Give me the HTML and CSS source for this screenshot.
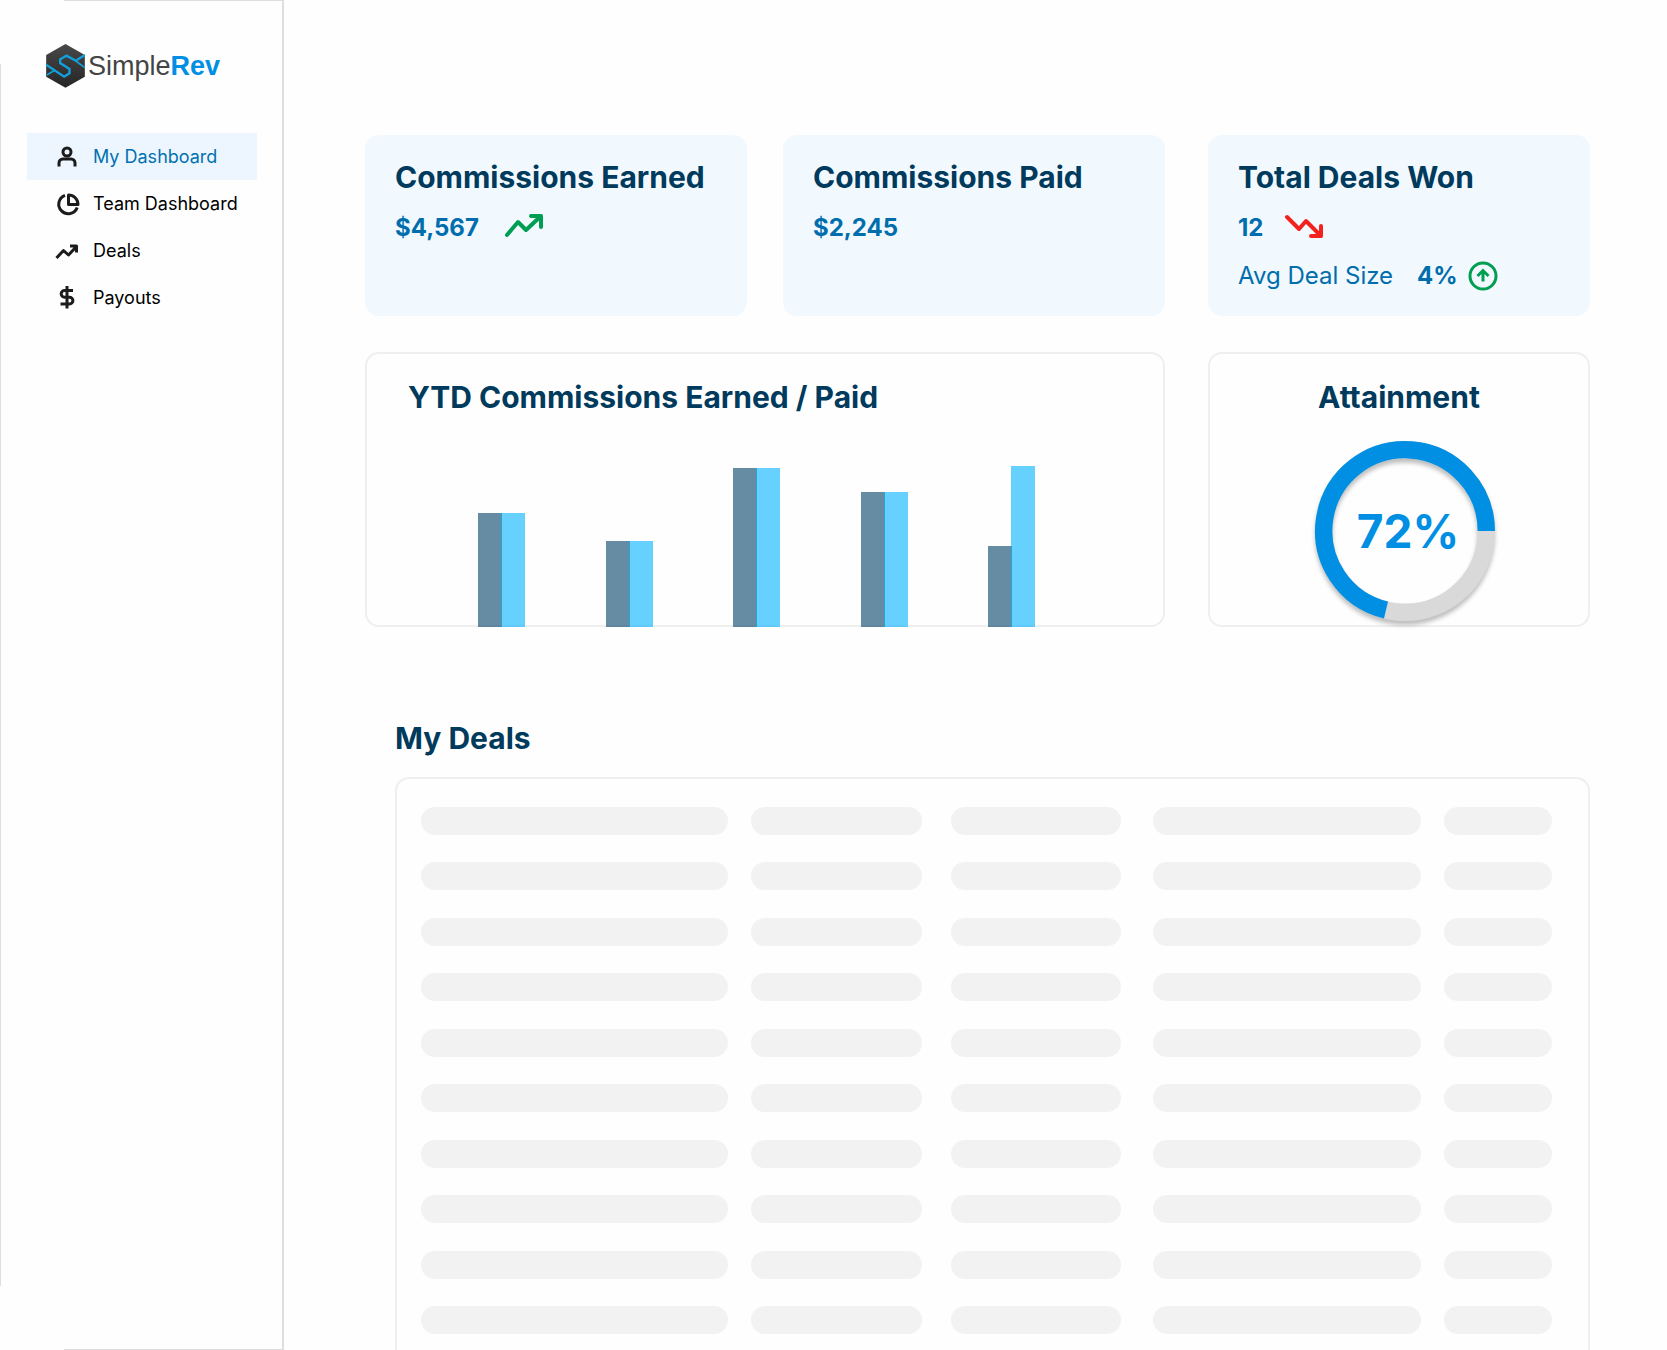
FILE: index.html
```html
<!DOCTYPE html>
<html lang="en">
<head>
<meta charset="utf-8">
<meta name="viewport" content="width=device-width, initial-scale=1">
<title>SimpleRev - My Dashboard</title>
<link rel="stylesheet" href="styles.css">
</head>
<body>
<div class="app">
  <aside class="sidebar">
    <a class="logo" href="#">
      <svg class="logo-mark" viewBox="0 0 116 132" aria-hidden="true">
        <defs><linearGradient id="hex" x1="0" y1="0" x2="0" y2="1"><stop offset="0" stop-color="#484848"/><stop offset="1" stop-color="#262626"/></linearGradient></defs>
        <path d="M58 0 116 33V98L58 131 0 98V33Z" fill="url(#hex)"/>
        <path d="M116 33 89 50 61 35 42 46V57L70 75V88L54 98 0 62" fill="none" stroke="#12a0dc" stroke-width="7"/>
        <path d="M89 51 116 71M2 93 27 78" fill="none" stroke="#12a0dc" stroke-width="5"/>
      </svg>
      <span class="logo-text">Simple<b>Rev</b></span>
    </a>
    <nav class="nav">
      <a class="nav-item active" href="#">
        <svg class="nav-icon" viewBox="0 0 24 24" aria-hidden="true"><circle cx="12" cy="7" r="4"/><path d="M4 21.500V18a4 4 0 0 1 4-4h8a4 4 0 0 1 4 4v3.500"/></svg>
        My Dashboard</a>
      <a class="nav-item" href="#">
        <svg class="nav-icon" viewBox="0 0 24 24" aria-hidden="true"><path d="M10 3.300A9.500 9.500 0 1 0 22.200 15.500M13.500 3v9.500H23A9.500 9.500 0 0 0 13.500 3Z"/></svg>
        Team Dashboard</a>
      <a class="nav-item" href="#">
        <svg class="nav-icon" viewBox="0 0 24 24" aria-hidden="true"><path d="M1.500 19 8.500 11.500l5 4.500 8-8.500M15 7h6.500V13.500"/></svg>
        Deals</a>
      <a class="nav-item" href="#">
        <svg class="nav-icon" viewBox="0 0 24 24" aria-hidden="true"><path d="M12 0v22.500M18 4.500H9.500a3.300 3.300 0 0 0 0 6.700h5a3.400 3.400 0 0 1 0 6.800H5.500"/></svg>
        Payouts</a>
    </nav>
  </aside>

  <main class="main">
    <div class="overview">
      <div class="pair">
        <section class="card">
          <h2>Commissions Earned</h2>
          <p class="value">$4,567
            <svg class="trend up" viewBox="0 0 40 24" aria-hidden="true"><path d="M4 19 15 6l8 8L38 0M28 0h10v11"/></svg>
          </p>
        </section>
        <section class="card">
          <h2>Commissions Paid</h2>
          <p class="value">$2,245</p>
        </section>
      </div>
      <section class="card">
        <h2>Total Deals Won</h2>
        <p class="value">12
          <svg class="trend down" viewBox="0 0 40 24" aria-hidden="true"><path d="M0 1 12 13 19 5 34 20M24 20h10V10"/></svg>
        </p>
        <p class="value"><span class="label">Avg Deal Size</span> <span class="delta">4%
          <svg class="badge" viewBox="0 0 30 30" aria-hidden="true"><circle cx="15" cy="15" r="13"/><path d="M15 20.500V10M9.500 15 15 9.500l5.500 5.500"/></svg></span>
        </p>
      </section>

      <section class="panel chart">
        <h2>YTD Commissions Earned / Paid</h2>
        <div class="bars">
          <div class="group"><i class="earned" style="height:114px"></i><i class="paid" style="height:114px"></i></div>
          <div class="group"><i class="earned" style="height:86px"></i><i class="paid" style="height:86px"></i></div>
          <div class="group"><i class="earned" style="height:159px"></i><i class="paid" style="height:159px"></i></div>
          <div class="group"><i class="earned" style="height:135px"></i><i class="paid" style="height:135px"></i></div>
          <div class="group"><i class="earned" style="height:81px"></i><i class="paid" style="height:161px"></i></div>
        </div>
      </section>
      <section class="panel attainment">
        <h2>Attainment</h2>
        <div class="gauge">
          <svg class="ring" viewBox="0 0 180 180" aria-hidden="true">
            <circle cx="90" cy="90" r="81.300" stroke="#d9d9d9"/>
            <path d="M171.300 90A81.300 81.300 0 1 0 71 169.050" stroke="#008fe2"/>
          </svg>
          <span class="percent">72%</span>
        </div>
      </section>
    </div>

    <section class="deals">
      <h2>My Deals</h2>
      <div class="panel deals-list">
        <div class="row"><i></i><i></i><i></i><i></i><i></i></div>
        <div class="row"><i></i><i></i><i></i><i></i><i></i></div>
        <div class="row"><i></i><i></i><i></i><i></i><i></i></div>
        <div class="row"><i></i><i></i><i></i><i></i><i></i></div>
        <div class="row"><i></i><i></i><i></i><i></i><i></i></div>
        <div class="row"><i></i><i></i><i></i><i></i><i></i></div>
        <div class="row"><i></i><i></i><i></i><i></i><i></i></div>
        <div class="row"><i></i><i></i><i></i><i></i><i></i></div>
        <div class="row"><i></i><i></i><i></i><i></i><i></i></div>
        <div class="row"><i></i><i></i><i></i><i></i><i></i></div>
      </div>
    </section>
  </main>
</div>
</body>
</html>
```

FILE: styles.css
```css
* { box-sizing: border-box; }

body {
  margin: 0;
  background: #fefefe;
  color: #003a5c;
  font-family: Inter, "Liberation Sans", sans-serif;
}

h2, p { margin: 0; }

h2 {
  font-size: 30px;
  font-weight: 700;
  line-height: 36px;
}

.app {
  display: flex;
  min-height: 100vh;
}

/* Sidebar: the frame is left open at its two left corners */
.sidebar {
  flex: none;
  width: 284px;
  padding: 44px 27px;
  background:
    linear-gradient(#dedede, #dedede) right top / 2px 100% no-repeat,
    linear-gradient(#dedede, #dedede) right top / calc(100% - 64px) 1px no-repeat,
    linear-gradient(#dedede, #dedede) right bottom / calc(100% - 64px) 1px no-repeat,
    linear-gradient(#dedede, #dedede) left center / 1px calc(100% - 128px) no-repeat;
}

.logo {
  display: flex;
  align-items: center;
  gap: 3px;
  margin-left: 19px;
  color: #444;
  text-decoration: none;
}

.logo-mark {
  width: 39px;
  height: 44px;
}

.logo-text {
  font: 27px/30px "Liberation Sans", Arial, sans-serif;
}

.logo-text b { color: #008fe2; }

.nav { margin-top: 45px; }

.nav-item {
  display: flex;
  align-items: center;
  gap: 14px;
  height: 47px;
  padding-left: 28px;
  color: #000;
  font-size: 18px;
  text-decoration: none;
  white-space: nowrap;
}

.nav-item.active {
  background: #edf6ff;
  color: #0071b0;
}

.nav-icon {
  flex: none;
  width: 24px;
  height: 24px;
  overflow: visible;
  fill: none;
  stroke: #1c1c1c;
  stroke-width: 3;
  stroke-linejoin: round;
}

/* Main area */
.main {
  display: flex;
  flex: 1;
  flex-direction: column;
  min-width: 0;
  padding: 135px 77px 0 81px;
}

.overview {
  display: grid;
  grid-template-columns: minmax(0, 800fr) minmax(0, 382fr);
  gap: 36px 43px;
}

.pair {
  display: grid;
  grid-template-columns: 1fr 1fr;
  gap: 36px;
}

.card {
  display: flex;
  flex-direction: column;
  gap: 18px;
  min-height: 181px;
  padding: 24px 30px 22px;
  border-radius: 14px;
  background: #f1f9ff;
}

.value {
  display: flex;
  align-items: center;
  gap: 24px;
  color: #006dac;
  font-size: 24px;
  font-weight: 700;
  line-height: 30px;
}

.label { font-weight: 400; }

.delta {
  display: flex;
  align-items: center;
  gap: 10px;
}

.trend {
  width: 40px;
  height: 24px;
  overflow: visible;
  fill: none;
  stroke-width: 4;
  stroke-linecap: round;
  stroke-linejoin: round;
}

.trend.up { stroke: #009e52; }
.trend.down { stroke: #f3221f; }

.badge {
  width: 30px;
  height: 30px;
  fill: none;
  stroke: #009e52;
  stroke-width: 3;
}

.panel {
  border: 2px solid #efefef;
  border-radius: 14px;
}

.chart {
  display: flex;
  flex-direction: column;
  justify-content: space-between;
  min-height: 275px;
  padding-top: 25px;
}

.chart h2 { padding-left: 41px; }

.bars {
  display: flex;
  align-items: flex-end;
  justify-content: space-between;
  margin-bottom: -2px;
  padding: 0 128px 0 111px;
}

.group {
  display: flex;
  align-items: flex-end;
}

/* Translucent bars: the one-pixel overlap shows as a darker seam */
.earned, .paid { width: 24px; }
.earned { background: rgba(0, 64, 102, .6); }

.paid {
  margin-left: -1px;
  background: rgba(0, 176, 255, .6);
}

.attainment {
  padding-top: 25px;
  text-align: center;
}

.gauge {
  display: grid;
  place-items: center;
  margin-top: 26px;
  margin-bottom: -2px;
  padding-left: 12px;
}

.ring, .percent { grid-area: 1 / 1; }

.ring {
  width: 180px;
  height: 180px;
  overflow: visible;
  fill: none;
  stroke-width: 17.400;
  filter: drop-shadow(0 4px 2px rgba(0, 0, 0, .25));
}

.percent {
  padding-left: 6px;
  color: #008fe2;
  font-size: 46px;
  font-weight: 700;
}

/* Deals */
.deals {
  display: flex;
  flex: 1;
  flex-direction: column;
  gap: 21px;
  margin-top: 93px;
  padding-left: 30px;
}

.deals-list {
  display: flex;
  flex: 1;
  flex-direction: column;
  justify-content: space-between;
  gap: 27px;
  padding: 28px 36px 16px 24px;
  border-bottom: 0;
  border-radius: 14px 14px 0 0;
}

.row {
  display: grid;
  grid-template-columns: 330fr 200fr 203fr 291fr 108fr;
}

.row i {
  height: 28px;
  margin-right: 23px;
  border-radius: 14px;
  background: #f2f2f2;
}

.row i:nth-child(2) { margin-right: 29px; }
.row i:nth-child(3) { margin-right: 32px; }
.row i:last-child { margin-right: 0; }
```
